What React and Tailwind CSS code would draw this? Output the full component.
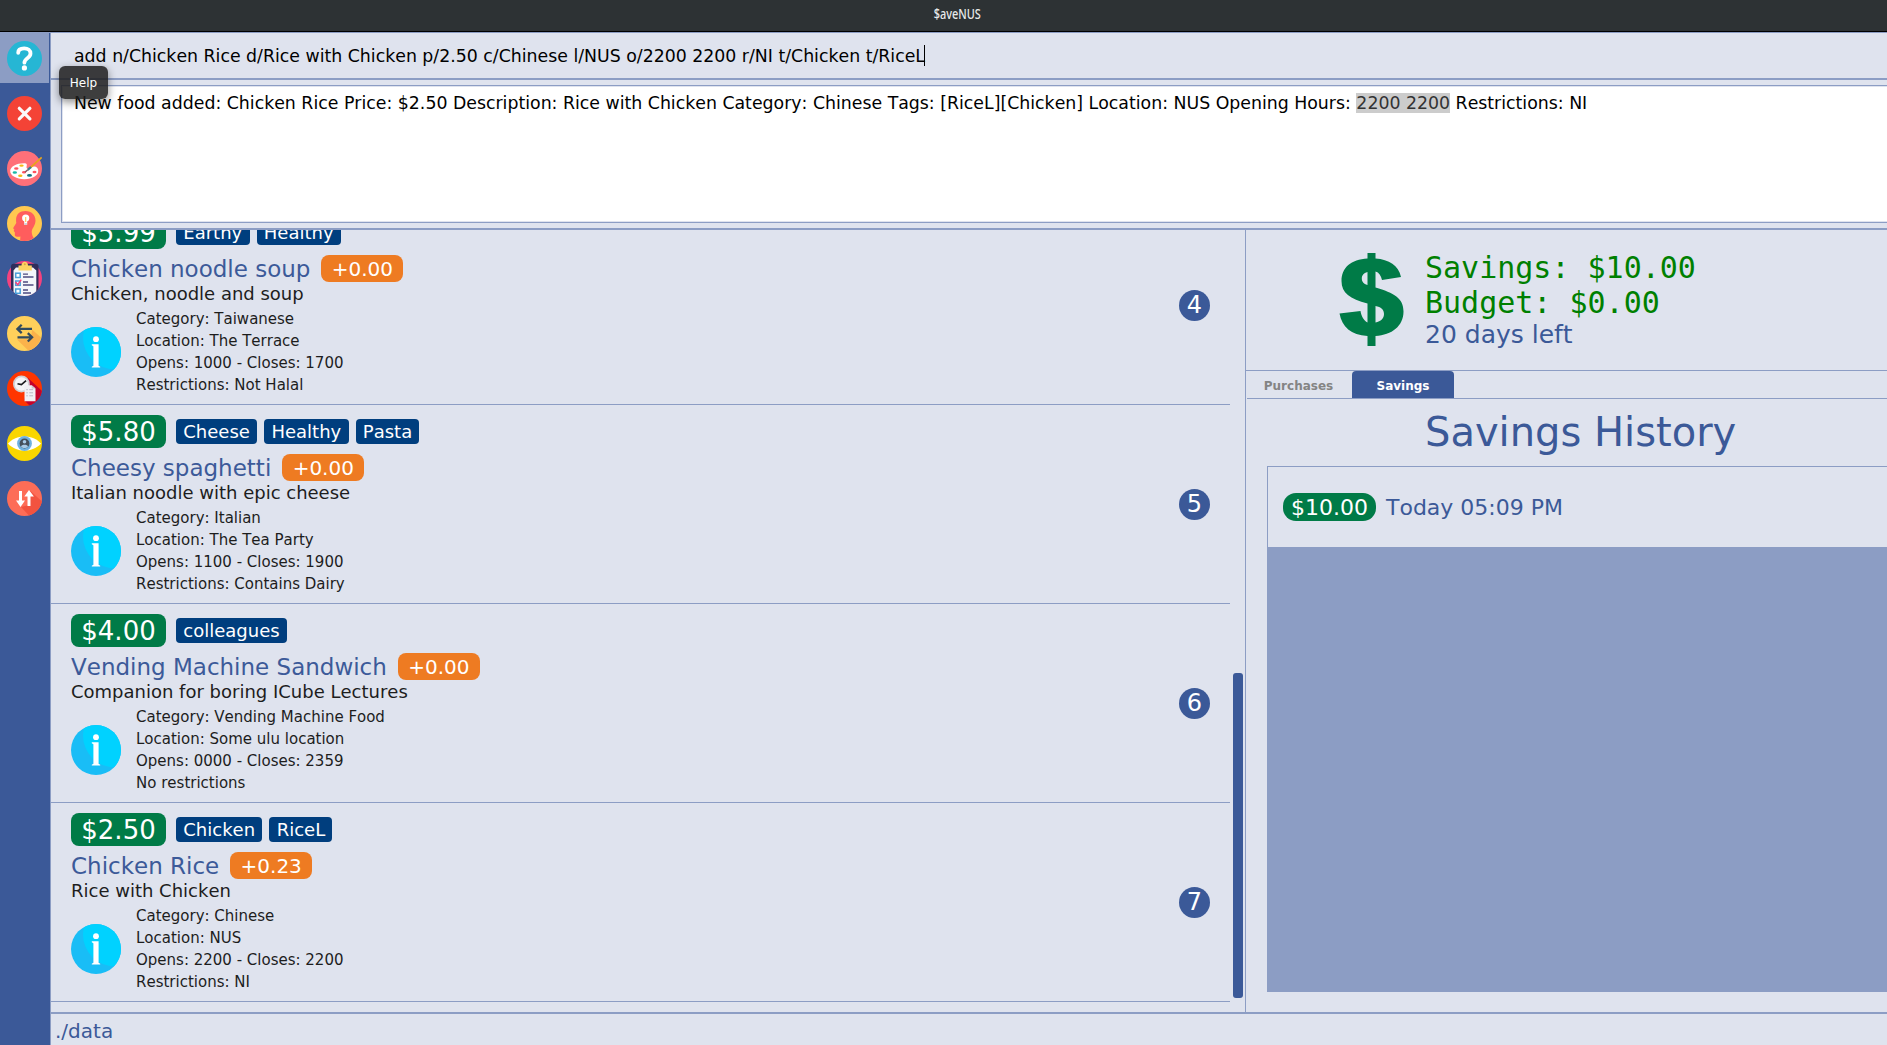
import React from "react";

const foods = [
  { price: "$5.99", tags: ["Earthy", "Healthy"], name: "Chicken noodle soup", delta: "+0.00", desc: "Chicken, noodle and soup", info: ["Category: Taiwanese", "Location: The Terrace", "Opens: 1000 - Closes: 1700", "Restrictions: Not Halal"], n: 4 },
  { price: "$5.80", tags: ["Cheese", "Healthy", "Pasta"], name: "Cheesy spaghetti", delta: "+0.00", desc: "Italian noodle with epic cheese", info: ["Category: Italian", "Location: The Tea Party", "Opens: 1100 - Closes: 1900", "Restrictions: Contains Dairy"], n: 5 },
  { price: "$4.00", tags: ["colleagues"], name: "Vending Machine Sandwich", delta: "+0.00", desc: "Companion for boring ICube Lectures", info: ["Category: Vending Machine Food", "Location: Some ulu location", "Opens: 0000 - Closes: 2359", "No restrictions"], n: 6 },
  { price: "$2.50", tags: ["Chicken", "RiceL"], name: "Chicken Rice", delta: "+0.23", desc: "Rice with Chicken", info: ["Category: Chinese", "Location: NUS", "Opens: 2200 - Closes: 2200", "Restrictions: NI"], n: 7 },
];

function Icon({ children }) {
  return (
    <svg viewBox="0 0 35 35" className="block h-[35px] w-[35px]">
      {children}
    </svg>
  );
}

const HelpIcon = () => (
  <Icon>
    <circle cx="17.5" cy="17.5" r="17.5" fill="#26b6d4" />
    <path d="M11.2 11.8C11.2 8.600 14 7.300 17.200 7.300c3.700 0 6.300 2 6.300 5.200 0 4.800-6.100 4.600-6.100 9.200" fill="none" stroke="#fff" strokeWidth="3.800" strokeLinecap="round" />
    <circle cx="17.400" cy="26.900" r="2.600" fill="#fff" />
  </Icon>
);

const ExitIcon = () => (
  <Icon>
    <circle cx="17.500" cy="17.500" r="17.500" fill="#f44336" />
    <path d="M12.300 12.300l10.600 10.600M22.900 12.300L12.300 22.900" stroke="#fafafa" strokeWidth="3.200" strokeLinecap="round" />
  </Icon>
);

const PaletteIcon = () => (
  <Icon>
    <circle cx="17.500" cy="17.500" r="17.500" fill="#ff7079" />
    <path d="M17 12.200C9.500 12.200 3.200 15.500 3.200 20c0 4.700 6.500 8.200 14 8.200 8.300 0 14-3.700 14-8.200 0-2.600-1.600-4.400-4-4.400-2.700 0-3 2-5 2.200-1.800.2-3.200-.7-2.600-2.400.6-1.800.5-3.200-2.600-3.200z" fill="#fff" />
    <ellipse cx="9.300" cy="17.500" rx="2.200" ry="1.300" fill="#ff5560" />
    <ellipse cx="14.500" cy="14.600" rx="2.200" ry="1.200" fill="#f5b915" />
    <ellipse cx="7.800" cy="21.500" rx="2.200" ry="1.300" fill="#17b9a6" />
    <ellipse cx="13.300" cy="24.700" rx="2.200" ry="1.300" fill="#f5b915" />
    <ellipse cx="22.500" cy="24.400" rx="2.500" ry="1.300" fill="#12747f" />
    <ellipse cx="27.500" cy="21" rx="2" ry="1.300" fill="#ff5560" />
    <ellipse cx="17" cy="21.300" rx="2" ry="1.200" fill="#ff5560" />
    <path d="M34.700 6.500L23 17" stroke="#e8a41a" strokeWidth="1.700" />
    <path d="M24 16l-3.200 2.900" stroke="#337f93" strokeWidth="2.200" />
    <path d="M20.800 18.700l-2.800 2.500" stroke="#8a5560" strokeWidth="1.500" />
  </Icon>
);

const MindIcon = () => (
  <Icon>
    <defs>
      <clipPath id="mind"><circle cx="17.500" cy="17.500" r="17.500" /></clipPath>
    </defs>
    <circle cx="17.500" cy="17.500" r="17.500" fill="#ffc850" />
    <g clipPath="url(#mind)">
      <path d="M18.500 5c6 0 10 4 10 9.600 0 4.600-2.600 6.900-3.600 9.900-.6 2.300.5 5.500 1.800 7.500L21 36h-8l.4-5.600c-2 .5-4.600.7-5.300-.6-.6-1.200 0-2.500-.3-3.600L6.700 25l.6-1.600c-1-.5-1.300-1.200-.7-2.100L9.300 17C8 9 12 5 18.500 5z" fill="#ff5d5d" />
    </g>
    <circle cx="18.700" cy="12" r="3.600" fill="#fff" />
    <path d="M17.200 12.500h3v6.300h-3z" fill="#fff" />
    <path d="M18.700 11v5" stroke="#ffc850" strokeWidth="1.100" />
    <path d="M17.500 18h2.500" stroke="#bcc4c8" strokeWidth="1.400" />
  </Icon>
);

const ListIcon = () => (
  <Icon>
    <defs>
      <clipPath id="clip"><path d="M0 17.500a17.500 17.500 0 0 0 35 0V0H0z" /></clipPath>
    </defs>
    <circle cx="17.500" cy="17.500" r="17.500" fill="#f5427e" />
    <g clipPath="url(#clip)">
      <rect x="4" y="2.700" width="27.500" height="32" rx="2.500" fill="#2f2d5b" />
      <path d="M6.500 9.500L9 6.500h17l3.300 3V36H6.500z" fill="#f3f6fa" />
    </g>
    <path d="M11.500 4.500h3c0-5 6.500-5 6.500 0h3.800v5H11.500z" fill="#fcd462" />
    <circle cx="17.800" cy="3.300" r="1" fill="#d9a441" />
    <g fill="#fff" stroke="#4aa0d9" strokeWidth="1.500">
      <rect x="8.700" y="12.200" width="4.500" height="4.300" />
      <rect x="8.700" y="20" width="4.500" height="4.300" />
      <rect x="8.700" y="28" width="4.500" height="4.300" />
    </g>
    <path d="M8.500 21l2.300 2.700 3.400-5" stroke="#f5427e" strokeWidth="1.500" fill="none" />
    <path d="M16 13.200h5M16 16h10.500M16 21h5M16 24h10.500M16 29h5M16 32h8" stroke="#4e4b80" strokeWidth="1.300" />
  </Icon>
);

const SwapIcon = () => (
  <Icon>
    <circle cx="17.500" cy="17.500" r="17.500" fill="#ffd05b" />
    <path d="M25 13.500l9 8c-1.600 7-7 11.800-12.700 13L10 23.500l14-.5z" fill="#fbb24b" />
    <path d="M25 12.900H10.700M14.700 8.700l-4.300 4.200 4.300 4.200M10.500 21.300h14.500M20.800 17.100l4.300 4.200-4.300 4.200" stroke="#324a5e" strokeWidth="2.300" fill="none" />
  </Icon>
);

const HistoryIcon = () => (
  <Icon>
    <defs>
      <clipPath id="hist"><circle cx="17.500" cy="17.500" r="17.500" /></clipPath>
    </defs>
    <circle cx="17.500" cy="17.500" r="17.500" fill="#ff3500" />
    <path d="M20.500 6.500L36 21v15H24l-7-7 2-6z" fill="#c4022b" clipPath="url(#hist)" />
    <circle cx="14.400" cy="13" r="8.400" fill="#cfcfd3" />
    <circle cx="14.400" cy="13" r="6.700" fill="#f5f5f7" />
    <path d="M10.500 12.800l3.900.8 4.700-4" stroke="#1b1b1d" strokeWidth="1.600" fill="none" />
    <path d="M17.500 14.200h7.200l3.800 3.300v12.700h-11z" fill="#f1f0f4" />
    <path d="M24.700 14.200l3.800 3.300h-3.800z" fill="#c9c8d0" />
    <path d="M19.300 18.700h1.500M22.300 18.700h3.800M19.300 21.800h1.500M22.300 21.800h3.800M19.300 24.800h1.500M22.300 24.800h3.800" stroke="#b8b7c4" strokeWidth="1" />
  </Icon>
);

const EyeIcon = () => (
  <Icon>
    <circle cx="17.500" cy="17.500" r="17.500" fill="#f9d600" />
    <path d="M1 17.500C9 8 26 8 34 17.500 26 27 9 27 1 17.500z" fill="#fff" />
    <circle cx="17.500" cy="17.500" r="7.400" fill="#6fb1e0" />
    <circle cx="17.500" cy="17.500" r="4.900" fill="#44505d" />
    <circle cx="17.500" cy="15.800" r="1.800" fill="#a8cbe8" />
    <path d="M14 20.500c.4-2.400 6.600-2.400 7 0-1.500 2-5.500 2-7 0z" fill="#a8cbe8" />
  </Icon>
);

const SortIcon = () => (
  <Icon>
    <circle cx="17.500" cy="17.500" r="17.500" fill="#fd6d57" />
    <path d="M23 9.500l12 11c-1.800 7.500-7.500 12.800-13 14L14 26l8-2z" fill="#f2533f" />
    <path d="M13.500 10v12M22 25V13" stroke="#fff" strokeWidth="3" />
    <path d="M9 19.500l4.500 6.500 4.500-6.500zM17.300 15.500L22 9l4.900 6.500z" fill="#fff" />
  </Icon>
);

const sidebar = [HelpIcon, ExitIcon, PaletteIcon, MindIcon, ListIcon, SwapIcon, HistoryIcon, EyeIcon, SortIcon];

function InfoIcon() {
  return (
    <svg viewBox="0 0 50 50" className="block h-[50px] w-[50px]">
      <defs>
        <clipPath id="info"><circle cx="25" cy="25" r="25" /></clipPath>
      </defs>
      <circle cx="25" cy="25" r="25" fill="#19bdf6" />
      <circle cx="44" cy="10.500" r="32" fill="#00d2ff" clipPath="url(#info)" />
      <circle cx="25" cy="12.200" r="2.900" fill="#fff" />
      <path d="M20.800 17.300h6.800v21.500c0 .5 1.600.6 1.600 1v.8h-8.400v-.8c0-.4 1.600-.5 1.600-1V19.600c0-.7-1.600-.8-1.600-1.300z" fill="#fff" />
    </svg>
  );
}

function FoodRow({ food }) {
  return (
    <div className="flex h-[199px] shrink-0 items-center border-b border-[#8c9dc4] pl-5 pr-5">
      <div className="flex h-full flex-1 flex-col pt-[10px]">
        <div className="flex h-[33px] items-center">
          <span className="flex h-[33px] w-[95px] items-center justify-center rounded-[8px] bg-[#007b47] text-[26px] leading-none text-white">{food.price}</span>
          <div className="ml-[10px] flex gap-[7px]">
            {food.tags.map((t) => (
              <span key={t} className="flex h-[25px] items-center rounded-[4px] bg-[#003e7e] px-[7.300px] text-[18px] leading-none text-white">{t}</span>
            ))}
          </div>
        </div>
        <div className="mt-[6px] flex h-[27px] items-center">
          <span className="whitespace-nowrap pt-[2px] text-[23px] leading-none text-[#3c5a99]">{food.name}</span>
          <span className="ml-[11px] flex h-[27px] w-[82px] items-center justify-center rounded-[8px] bg-[#ee7b22] text-[20px] leading-none text-white">{food.delta}</span>
        </div>
        <div className="h-[22px] text-[18px] leading-[23px] text-[#1d1d1d]">{food.desc}</div>
        <div className="mt-[4px] flex h-[88px] items-center">
          <InfoIcon />
          <div className="ml-[15px] text-[15px] leading-[22px] text-[#1d1d1d]">
            {food.info.map((l) => (
              <div key={l}>{l}</div>
            ))}
          </div>
        </div>
      </div>
      <div className="flex h-[31px] w-[31px] items-center justify-center rounded-full bg-[#3b5998] text-[24px] leading-none text-white">{food.n}</div>
    </div>
  );
}

export default function App() {
  return (
    <div className="flex h-[1045px] w-[1887px] flex-col overflow-hidden bg-[#dfe3ee] font-['DejaVu_Sans',sans-serif] [font-kerning:none]">
      <header className="flex h-8 shrink-0 items-center justify-center border-b border-black bg-[#2d3234] pl-[28px] pb-[4px]">
        <span className="inline-block scale-x-[0.78] scale-y-[1.08] font-['Noto_Sans',sans-serif] text-[14px] font-medium leading-none text-[#e8eaea]">$aveNUS</span>
      </header>
      <div className="flex min-h-0 flex-1 border-t border-[#8c9dc4]">
        <nav className="relative flex w-[51px] shrink-0 flex-col border-r border-[#8c9dc4] bg-[#3b5998]">
          {sidebar.map((I, i) => (
            <div key={i} className={i === 0 ? "mb-[4px] flex h-[50px] w-[49px] items-start bg-[#8c9dc4] pl-[7px] pt-[8px]" : "flex h-[55px] items-start pl-[7px] pt-[9px]"}>
              <I />
            </div>
          ))}
          <div className="absolute left-[59px] top-[33px] z-10 flex h-[33px] w-[49px] items-center justify-center rounded-[6px] bg-[rgba(30,30,30,0.86)] text-[12px] leading-none text-white shadow-[0_3px_8px_rgba(0,0,0,0.45)]">Help</div>
        </nav>
        <main className="flex min-w-0 flex-1 flex-col">
          <div className="flex h-[47px] shrink-0 items-center border-b-2 border-[#8c9dc4] pl-[23px]">
            <span className="whitespace-pre pt-[2px] text-[17.330px] leading-none text-black">add n/Chicken Rice d/Rice with Chicken p/2.50 c/Chinese l/NUS o/2200 2200 r/NI t/Chicken t/RiceL</span>
            <span className="-ml-px h-[21px] w-px bg-black" />
          </div>
          <div className="h-[150px] shrink-0 border-b-2 border-[#8c9dc4] pl-[10px] pt-[5px]">
            <div className="h-[138px] border border-r-0 border-[#8c9dc4] p-px pr-0">
              <div className="h-full whitespace-pre bg-white pl-[11px] pt-[6px] text-[17.330px] leading-[21px] text-black">
                New food added: Chicken Rice Price: $2.50 Description: Rice with Chicken Category: Chinese Tags: [RiceL][Chicken] Location: NUS Opening Hours: <span className="bg-[#cccccc] text-[#333]">2200 2200</span> Restrictions: NI
              </div>
            </div>
          </div>
          <div className="flex min-h-0 flex-1 border-b-2 border-[#8c9dc4]">
            <section className="flex w-[1194px] shrink-0 overflow-hidden">
              <div className="-mt-[24px] flex w-[1179px] shrink-0 flex-col">
                {foods.map((f) => (
                  <FoodRow key={f.n} food={f} />
                ))}
              </div>
              <div className="ml-[3px] mt-[443px] h-[325px] w-[10px] rounded-[3px] bg-[#3b5998]" />
            </section>
            <section className="flex min-w-0 flex-1 flex-col border-l border-[#8c9dc4]">
              <div className="flex h-[141px] shrink-0 border-b border-[#8c9dc4] pl-[93px] pt-[23px]">
                <svg viewBox="0 0 65 93" className="h-[93px] w-[65px] shrink-0">
                  <path fillRule="evenodd" fill="#007b47" d="M28.500 0H36.500V5.500C50 6.500 59.500 12 62 24L43 27C42 22.500 40 19.500 36.500 18.500V34.500C55 40 64.500 45 64.500 58.500 64.500 73 53 82 36.500 83V93H28.500V83C12 82 3 74 0.500 60.500L21.500 58C22.500 64 25 67.500 28.500 69.500V50.500C11 46 2.500 40 2.500 28 2.500 14.500 12 6.500 28.500 5.500ZM28.500 19C24.500 20 22.800 22.500 22.800 25.500 22.800 28.500 24.500 31 28.500 32ZM36.500 53V69.500C42 68.500 45 65 45 61 45 56.500 42 54 36.500 53Z" />
                </svg>
                <div className="ml-[21px] -mt-[3px] whitespace-pre">
                  <div className="font-['DejaVu_Sans_Mono',monospace] text-[30px] leading-[35px] text-[#008000]">Savings: $10.00</div>
                  <div className="font-['DejaVu_Sans_Mono',monospace] text-[30px] leading-[35px] text-[#008000]">Budget: $0.00</div>
                  <div className="text-[25px] leading-[29px] text-[#3b5998]">20 days left</div>
                </div>
              </div>
              <div className="ml-px flex h-[28px] shrink-0 border-b border-[#8c9dc4] text-[12px] font-bold leading-none">
                <div className="flex w-[105px] items-center justify-center pr-[2px] pt-[2px] text-[#848484]">Purchases</div>
                <div className="flex w-[102px] items-center justify-center rounded-t-[4px] bg-[#3b5998] pt-[2px] text-white">Savings</div>
              </div>
              <h1 className="h-[67px] shrink-0 whitespace-nowrap pl-[179px] pt-[10px] text-[40px] leading-[47px] text-[#3b5998]">Savings History</h1>
              <div className="ml-[21px] h-[526px] border-l border-t border-[#8c9dc4] bg-[#8c9dc4]">
                <div className="flex h-[80px] items-center bg-[#dfe3ee] pl-[15px] text-[22px] leading-none">
                  <span className="flex h-[28px] w-[93px] items-center justify-center rounded-[13px] bg-[#007b47] pt-[2px] text-white">$10.00</span>
                  <span className="ml-[10px] pt-[2px] text-[#3b5998]">Today 05:09 PM</span>
                </div>
              </div>
            </section>
          </div>
          <footer className="flex h-[31px] shrink-0 items-center pl-[4px] pt-[2px] text-[20px] leading-none text-[#3b5998]">./data</footer>
        </main>
      </div>
    </div>
  );
}
